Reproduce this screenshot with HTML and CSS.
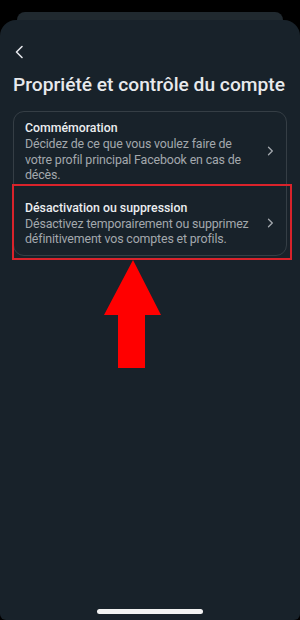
FILE: index.html
```html
<!DOCTYPE html>
<html lang="fr">
<head>
<meta charset="utf-8">
<link rel="stylesheet" href="styles.css">
</head>
<body>
<div class="screen">
  <div class="back-sheet"></div>
  <div class="sheet">
    <div class="nav">
      <svg class="back" width="10" height="14" viewBox="0 0 10 14"><path d="M8 1.5 L2.5 7 L8 12.5" fill="none" stroke="#e4e6eb" stroke-width="1.6" stroke-linecap="round" stroke-linejoin="round"/></svg>
    </div>
    <h1 class="title">Propriété et contrôle du compte</h1>
    <div class="card">
      <div class="item">
        <div class="item-text">
          <div class="item-title">Commémoration</div>
          <div class="item-desc">Décidez de ce que vous voulez faire de votre profil principal Facebook en cas de décès.</div>
        </div>
        <svg class="chev" width="7" height="10" viewBox="0 0 7 10"><path d="M1.5 1.2 L5.3 5 L1.5 8.8" fill="none" stroke="#a4a9ae" stroke-width="1.3" stroke-linecap="round" stroke-linejoin="round"/></svg>
      </div>
      <div class="item item-second">
        <div class="item-text">
          <div class="item-title">Désactivation ou suppression</div>
          <div class="item-desc">Désactivez temporairement ou supprimez définitivement vos comptes et profils.</div>
        </div>
        <svg class="chev" width="7" height="10" viewBox="0 0 7 10"><path d="M1.5 1.2 L5.3 5 L1.5 8.8" fill="none" stroke="#a4a9ae" stroke-width="1.3" stroke-linecap="round" stroke-linejoin="round"/></svg>
      </div>
      <div class="highlight"></div>
    </div>
    <svg class="arrow" width="60" height="108" viewBox="0 0 60 108"><polygon points="29,0 57,55 41,55 41,108 14,108 14,55 0,55" fill="#ff0000"/></svg>
    <div class="spacer"></div>
    <div class="home-bar"></div>
  </div>
</div>
</body>
</html>
```
FILE: styles.css
```css
* { box-sizing: border-box; }
html, body { margin: 0; padding: 0; background: #000; }
body { width: 300px; height: 620px; overflow: hidden; font-family: Roboto, "Noto Sans", sans-serif; }
.screen { width: 300px; height: 620px; display: flex; flex-direction: column; padding-top: 12px; }
.back-sheet { margin: 0 17px; height: 8px; flex: none; background: #20292f; border-radius: 10px 10px 0 0; }
.sheet { flex: 1; background: #18222a; border-radius: 16px 16px 6px 6px; display: flex; flex-direction: column; padding: 0 13px; position: relative; }
.nav { height: 48px; display: flex; align-items: flex-start; padding-top: 25px; padding-left: 1px; }
.back { display: block; }
.title { margin: 6px 0 0; font-size: 19.2px; font-weight: 500; color: #e8eaed; line-height: 22px; letter-spacing: 0; white-space: nowrap; }
.card { margin-top: 15px; border: 1px solid #353e45; border-radius: 11px; position: relative; }
.item { display: flex; align-items: center; padding: 8px 12px 8px 11px; gap: 8px; }
.item-second { padding-top: 9px; padding-bottom: 8px; }
.item-text { flex: 1; }
.item-title { font-size: 12.3px; font-weight: 500; color: #eceef0; line-height: 16px; }
.item-desc { font-size: 12.4px; letter-spacing: -0.15px; color: #a3a8ad; line-height: 15.5px; }
.chev { flex: none; display: block; }
.highlight { position: absolute; left: -2px; right: -6px; top: 72px; bottom: -5px; border: 2px solid #d9232b; pointer-events: none; }
.arrow { display: block; margin: 4px 0 0 91px; }
.spacer { flex: 1; }
.home-bar { align-self: center; width: 106px; height: 5px; background: #f2f2f2; border-radius: 3px; margin-bottom: 6px; }
```
